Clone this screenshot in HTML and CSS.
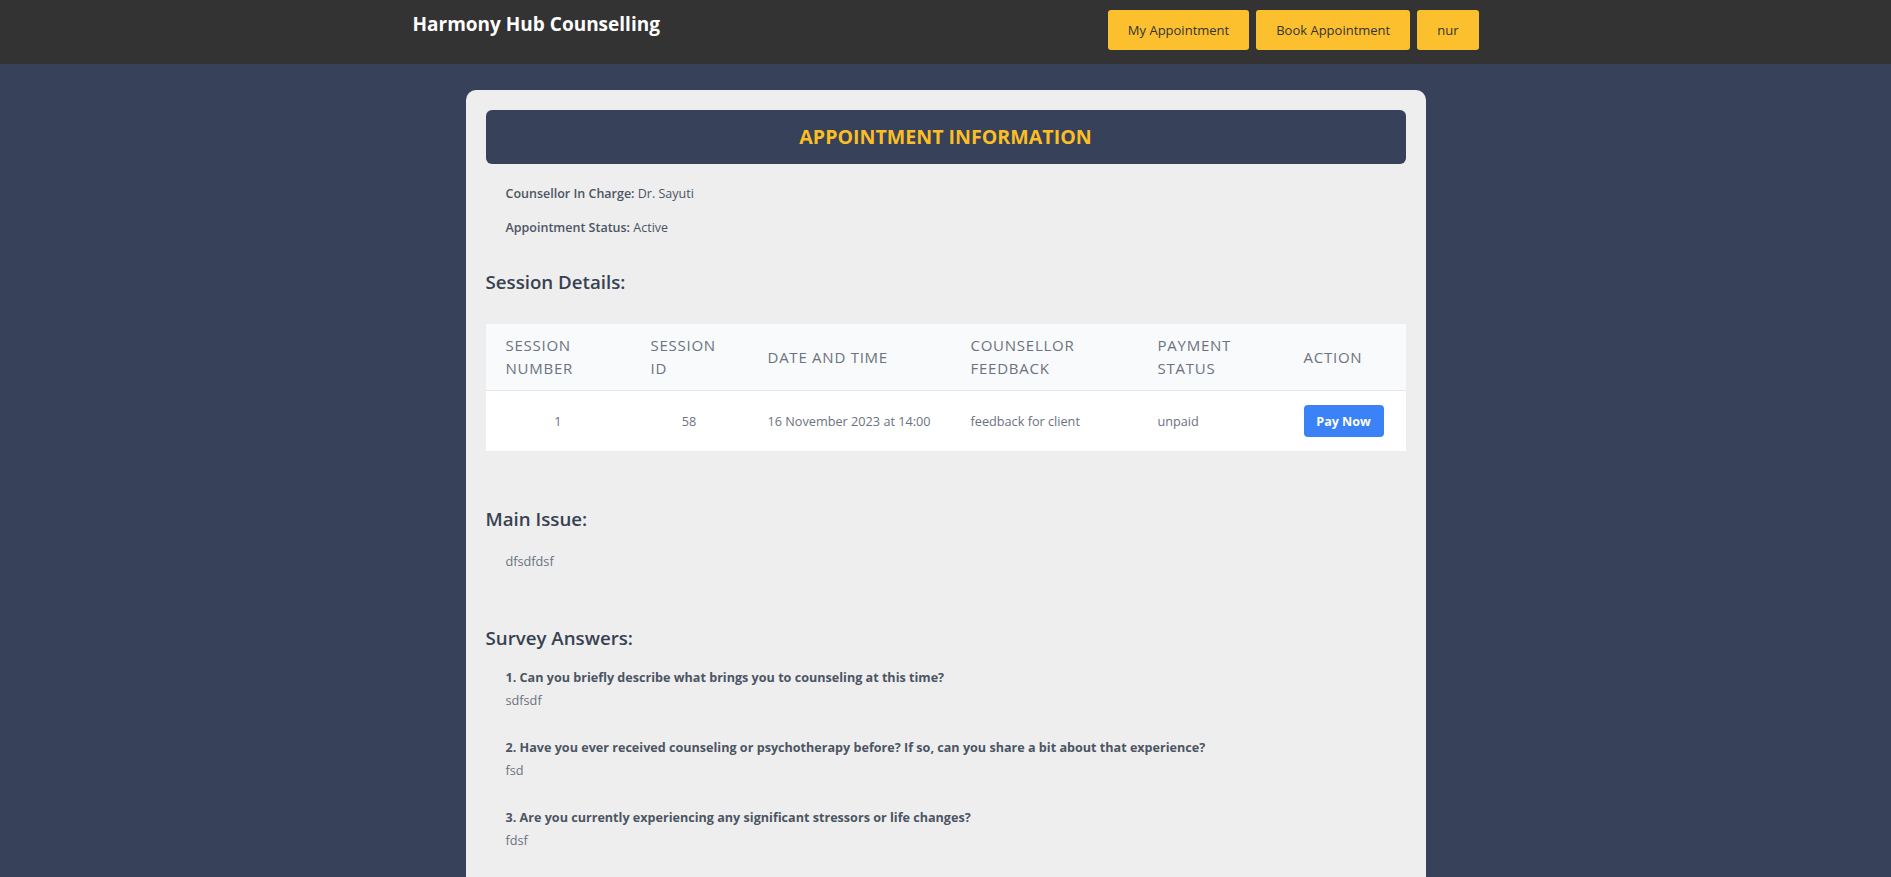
FILE: index.html
```html
<!DOCTYPE html>
<html lang="en">
<head>
<meta charset="utf-8">
<title>Harmony Hub Counselling</title>
<link rel="stylesheet" href="styles.css">
</head>
<body>
<header class="navbar">
  <div class="nav-inner">
    <div class="brand">Harmony Hub Counselling</div>
    <nav class="nav-buttons">
      <a class="nav-btn">My Appointment</a>
      <a class="nav-btn">Book Appointment</a>
      <a class="nav-btn">nur</a>
    </nav>
  </div>
</header>
<main class="card">
  <div class="banner">APPOINTMENT INFORMATION</div>
  <div class="info">
    <p><span class="label">Counsellor In Charge:</span> Dr. Sayuti</p>
    <p><span class="label">Appointment Status:</span> Active</p>
  </div>
  <h2 class="section-title session-title">Session Details:</h2>
  <table class="sessions">
    <colgroup>
      <col class="c1"><col class="c2"><col class="c3"><col class="c4"><col class="c5"><col class="c6">
    </colgroup>
    <thead>
      <tr>
        <th>Session Number</th>
        <th>Session ID</th>
        <th>Date and Time</th>
        <th>Counsellor Feedback</th>
        <th>Payment Status</th>
        <th>Action</th>
      </tr>
    </thead>
    <tbody>
      <tr>
        <td class="center">1</td>
        <td class="center">58</td>
        <td>16 November 2023 at 14:00</td>
        <td>feedback for client</td>
        <td>unpaid</td>
        <td><button class="pay-btn">Pay Now</button></td>
      </tr>
    </tbody>
  </table>
  <h2 class="section-title issue-title">Main Issue:</h2>
  <p class="issue-text">dfsdfdsf</p>
  <h2 class="section-title survey-title">Survey Answers:</h2>
  <div class="survey">
    <div class="qa">
      <p class="question">1. Can you briefly describe what brings you to counseling at this time?</p>
      <p class="answer">sdfsdf</p>
    </div>
    <div class="qa">
      <p class="question">2. Have you ever received counseling or psychotherapy before? If so, can you share a bit about that experience?</p>
      <p class="answer">fsd</p>
    </div>
    <div class="qa">
      <p class="question">3. Are you currently experiencing any significant stressors or life changes?</p>
      <p class="answer">fdsf</p>
    </div>
  </div>
</main>
</body>
</html>
```
FILE: styles.css
```css
* { box-sizing: border-box; }
html, body { margin: 0; padding: 0; }
body {
  background: #374159;
  font-family: "Open Sans", "Noto Sans", sans-serif;
  color: #4b5563;
}
.navbar {
  background: #333333;
  height: 64px;
  padding-top: 10px;
}
.nav-inner {
  width: 1066px;
  margin: 0 auto;
  display: flex;
  justify-content: space-between;
  align-items: flex-start;
}
.brand {
  color: #ffffff;
  font-size: 19px;
  font-weight: 700;
  line-height: 28px;
}
.nav-buttons {
  display: flex;
  gap: 7px;
}
.nav-btn {
  display: flex;
  align-items: center;
  height: 40px;
  padding: 0 20px;
  background: #fcc02e;
  color: #333333;
  border-radius: 3px;
  font-size: 13px;
  font-weight: 500;
}
.card {
  width: 960px;
  margin: 26px auto 0;
  background: #eeeeee;
  border-radius: 10px;
  padding: 20px 20px 60px;
}
.banner {
  height: 54px;
  line-height: 54px;
  background: #374159;
  border-radius: 6px;
  text-align: center;
  color: #fbbf24;
  font-size: 19.6px;
  font-weight: 700;
}
.info {
  margin-top: 20px;
  padding-left: 20px;
  display: flex;
  flex-direction: column;
  gap: 14px;
  font-size: 12.5px;
  color: #4b5563;
}
.info p { margin: 0; line-height: 20px; }
.label { font-weight: 600; }
.section-title {
  margin: 0;
  font-size: 18.7px;
  font-weight: 600;
  line-height: 28px;
  color: #374151;
}
.session-title { margin-top: 30px; }
.sessions {
  margin-top: 28px;
  width: 920px;
  table-layout: fixed;
  border-collapse: collapse;
}
.c1 { width: 145px; }
.c2 { width: 117px; }
.c3 { width: 203px; }
.c4 { width: 187px; }
.c5 { width: 146px; }
.c6 { width: 122px; }
.sessions th {
  background: #f9fafb;
  text-align: left;
  text-transform: uppercase;
  letter-spacing: 0.05em;
  color: #6b7280;
  font-size: 15px;
  font-weight: 500;
  line-height: 23px;
  padding: 10px 20px;
  border-bottom: 1px solid #e5e7eb;
  vertical-align: middle;
}
.sessions td {
  background: #ffffff;
  color: #6b7280;
  font-size: 12.7px;
  line-height: 20px;
  padding: 14px 20px;
  vertical-align: middle;
  white-space: nowrap;
}
.sessions td.center { text-align: center; }
.pay-btn {
  width: 80px;
  height: 32px;
  border: 0;
  border-radius: 4px;
  background: #3b82f6;
  color: #ffffff;
  font-family: inherit;
  font-size: 12.5px;
  font-weight: 700;
  display: flex;
  align-items: center;
  justify-content: center;
}
.issue-title { margin-top: 54px; }
.issue-text {
  margin: 18px 0 0;
  padding-left: 20px;
  font-size: 12.7px;
  line-height: 20px;
  color: #6b7280;
}
.survey-title { margin-top: 53px; }
.survey {
  margin-top: 14px;
  padding-left: 20px;
  display: flex;
  flex-direction: column;
  gap: 24px;
}
.qa p { margin: 0; line-height: 23px; }
.question {
  font-size: 12.6px;
  font-weight: 700;
  color: #4b5563;
}
.answer {
  font-size: 12.7px;
  color: #6b7280;
}
```
